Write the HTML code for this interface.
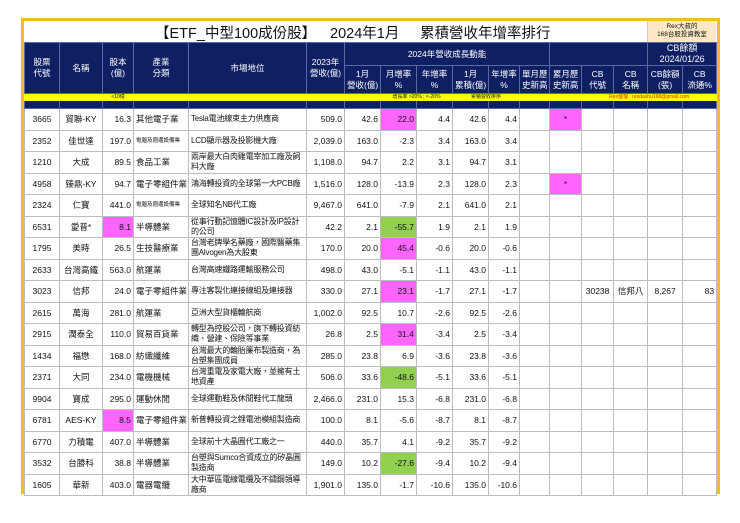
<!DOCTYPE html>
<html><head><meta charset="utf-8"><style>
*{margin:0;padding:0;box-sizing:border-box}
body{width:740px;height:523px;background:#fff;position:relative;overflow:hidden;font-family:"Liberation Sans","Noto Sans CJK TC",sans-serif;color:#111}
#frame{position:absolute;left:21px;top:18px;width:699px;height:476px;border:3px solid #f2bd1d;border-bottom:none}
#title{position:absolute;left:24px;top:21px;width:692px;height:21px;font-size:14.5px;white-space:nowrap}
#title span{position:absolute;top:1px}
#rex{position:absolute;left:647px;top:21px;width:69px;height:21px;background:#fce8c4;font-size:6.5px;text-align:center;line-height:8px;padding-top:2px;border-left:1px solid #ccc}
table{position:absolute;left:24px;top:42px;border-collapse:collapse;table-layout:fixed;width:692px}
td{border:1px solid #bdbdbd;font-size:8.5px;overflow:hidden;white-space:nowrap;padding:0 2px}
tr.h td{background:#0e1f63;color:#fff;text-align:center;border-color:#5a6aa0;line-height:11px;font-size:8.5px}
tr.y td{background:#ffff00;height:6px;font-size:5px;line-height:6px;border-color:#ffff00;padding:0}
tr.d td{background:#0e1f63;height:8px;border-color:#5a6aa0}
tr.r td{height:21.5px;line-height:10px}
tr.r td:nth-child(5){font-size:8px;letter-spacing:-0.2px}
.c{text-align:center}.rt{text-align:right}.l{text-align:left}
.w{white-space:normal}
.p{background:#ff66ff}.g{background:#92d050}
.s{font-size:5.5px}
</style></head><body>
<div id="frame"></div>
<div id="title"><span style="left:131px">【ETF_中型100成份股】</span><span style="left:306px">2024年1月</span><span style="left:396px">累積營收年增率排行</span></div>
<div id="rex">Rex大叔的<br>168台股投資教室</div>
<table>
<colgroup><col style="width:35px"><col style="width:43px"><col style="width:31px"><col style="width:55px"><col style="width:118px"><col style="width:38px"><col style="width:36px"><col style="width:36px"><col style="width:36px"><col style="width:36px"><col style="width:31px"><col style="width:30px"><col style="width:32px"><col style="width:32px"><col style="width:34px"><col style="width:35px"><col style="width:34px"></colgroup>
<tr class="h" style="height:20px"><td rowspan="2">股票<br>代號</td><td rowspan="2">名稱</td><td rowspan="2">股本<br>(億)</td><td rowspan="2">產業<br>分類</td><td rowspan="2">市場地位</td><td rowspan="2">2023年<br>營收(億)</td><td colspan="6">2024年營收成長動能</td><td colspan="3"></td><td colspan="2" style="font-size:9px">CB餘額<br>2024/01/26</td></tr>
<tr class="h" style="height:28px"><td>1月<br>營收(億)</td><td>月增率<br>%</td><td>年增率<br>%</td><td>1月<br>累積(億)</td><td>年增率<br>%</td><td>單月歷<br>史新高</td><td>累月歷<br>史新高</td><td>CB<br>代號</td><td>CB<br>名稱</td><td>CB餘額<br>(張)</td><td>CB<br>流通%</td></tr>
<tr class="y"><td></td><td></td><td class="c">&lt;10億</td><td></td><td></td><td></td><td></td><td colspan="2" class="c">增長率 &gt;20% ; &lt;-20%</td><td colspan="2" class="c">累積營收排序</td><td></td><td></td><td colspan="4" class="c" style="color:#e02020">Rex整理 : rexdashu168@gmail.com</td></tr>
<tr class="d"><td></td><td></td><td></td><td></td><td></td><td></td><td></td><td></td><td></td><td></td><td></td><td></td><td></td><td></td><td></td><td></td><td></td></tr>
<tr class="r"><td class="c">3665</td><td class="c">貿聯-KY</td><td class="rt">16.3</td><td>其他電子業</td><td>Tesla電池線束主力供應商</td><td class="rt">509.0</td><td class="rt">42.6</td><td class="rt p">22.0</td><td class="rt">4.4</td><td class="rt">42.6</td><td class="rt">4.4</td><td></td><td class="c p">*</td><td></td><td></td><td></td><td></td></tr>
<tr class="r"><td class="c">2352</td><td class="c">佳世達</td><td class="rt">197.0</td><td class="s">電腦及週邊設備業</td><td>LCD顯示器及投影機大廠</td><td class="rt">2,039.0</td><td class="rt">163.0</td><td class="rt">-2.3</td><td class="rt">3.4</td><td class="rt">163.0</td><td class="rt">3.4</td><td></td><td></td><td></td><td></td><td></td><td></td></tr>
<tr class="r"><td class="c">1210</td><td class="c">大成</td><td class="rt">89.5</td><td>食品工業</td><td class="w">兩岸最大白肉雞電宰加工廠及飼料大廠</td><td class="rt">1,108.0</td><td class="rt">94.7</td><td class="rt">2.2</td><td class="rt">3.1</td><td class="rt">94.7</td><td class="rt">3.1</td><td></td><td></td><td></td><td></td><td></td><td></td></tr>
<tr class="r"><td class="c">4958</td><td class="c">臻鼎-KY</td><td class="rt">94.7</td><td>電子零組件業</td><td>鴻海轉投資的全球第一大PCB廠</td><td class="rt">1,516.0</td><td class="rt">128.0</td><td class="rt">-13.9</td><td class="rt">2.3</td><td class="rt">128.0</td><td class="rt">2.3</td><td></td><td class="c p">*</td><td></td><td></td><td></td><td></td></tr>
<tr class="r"><td class="c">2324</td><td class="c">仁寶</td><td class="rt">441.0</td><td class="s">電腦及週邊設備業</td><td>全球知名NB代工廠</td><td class="rt">9,467.0</td><td class="rt">641.0</td><td class="rt">-7.9</td><td class="rt">2.1</td><td class="rt">641.0</td><td class="rt">2.1</td><td></td><td></td><td></td><td></td><td></td><td></td></tr>
<tr class="r"><td class="c">6531</td><td class="c">愛普*</td><td class="rt p">8.1</td><td>半導體業</td><td class="w">從事行動記憶體IC設計及IP設計的公司</td><td class="rt">42.2</td><td class="rt">2.1</td><td class="rt g">-55.7</td><td class="rt">1.9</td><td class="rt">2.1</td><td class="rt">1.9</td><td></td><td></td><td></td><td></td><td></td><td></td></tr>
<tr class="r"><td class="c">1795</td><td class="c">美時</td><td class="rt">26.5</td><td>生技醫療業</td><td class="w">台灣老牌學名藥廠，國際醫藥集團Alvogen為大股東</td><td class="rt">170.0</td><td class="rt">20.0</td><td class="rt p">45.4</td><td class="rt">-0.6</td><td class="rt">20.0</td><td class="rt">-0.6</td><td></td><td></td><td></td><td></td><td></td><td></td></tr>
<tr class="r"><td class="c">2633</td><td class="c">台灣高鐵</td><td class="rt">563.0</td><td>航運業</td><td>台灣高速鐵路運輸服務公司</td><td class="rt">498.0</td><td class="rt">43.0</td><td class="rt">-5.1</td><td class="rt">-1.1</td><td class="rt">43.0</td><td class="rt">-1.1</td><td></td><td></td><td></td><td></td><td></td><td></td></tr>
<tr class="r"><td class="c">3023</td><td class="c">信邦</td><td class="rt">24.0</td><td>電子零組件業</td><td>專注客製化連接線組及連接器</td><td class="rt">330.0</td><td class="rt">27.1</td><td class="rt p">23.1</td><td class="rt">-1.7</td><td class="rt">27.1</td><td class="rt">-1.7</td><td></td><td></td><td class="c">30238</td><td class="c">信邦八</td><td class="c">8,267</td><td class="rt">83</td></tr>
<tr class="r"><td class="c">2615</td><td class="c">萬海</td><td class="rt">281.0</td><td>航運業</td><td>亞洲大型貨櫃輪航商</td><td class="rt">1,002.0</td><td class="rt">92.5</td><td class="rt">10.7</td><td class="rt">-2.6</td><td class="rt">92.5</td><td class="rt">-2.6</td><td></td><td></td><td></td><td></td><td></td><td></td></tr>
<tr class="r"><td class="c">2915</td><td class="c">潤泰全</td><td class="rt">110.0</td><td>貿易百貨業</td><td class="w">轉型為控股公司，旗下轉投資紡織、營建、保險等事業</td><td class="rt">26.8</td><td class="rt">2.5</td><td class="rt p">31.4</td><td class="rt">-3.4</td><td class="rt">2.5</td><td class="rt">-3.4</td><td></td><td></td><td></td><td></td><td></td><td></td></tr>
<tr class="r"><td class="c">1434</td><td class="c">福懋</td><td class="rt">168.0</td><td>紡織纖維</td><td class="w">台灣最大的輪胎簾布製造商，為台塑集團成員</td><td class="rt">285.0</td><td class="rt">23.8</td><td class="rt">6.9</td><td class="rt">-3.6</td><td class="rt">23.8</td><td class="rt">-3.6</td><td></td><td></td><td></td><td></td><td></td><td></td></tr>
<tr class="r"><td class="c">2371</td><td class="c">大同</td><td class="rt">234.0</td><td>電機機械</td><td class="w">台灣重電及家電大廠，並擁有土地資產</td><td class="rt">506.0</td><td class="rt">33.6</td><td class="rt g">-48.6</td><td class="rt">-5.1</td><td class="rt">33.6</td><td class="rt">-5.1</td><td></td><td></td><td></td><td></td><td></td><td></td></tr>
<tr class="r"><td class="c">9904</td><td class="c">寶成</td><td class="rt">295.0</td><td>運動休閒</td><td>全球運動鞋及休閒鞋代工龍頭</td><td class="rt">2,466.0</td><td class="rt">231.0</td><td class="rt">15.3</td><td class="rt">-6.8</td><td class="rt">231.0</td><td class="rt">-6.8</td><td></td><td></td><td></td><td></td><td></td><td></td></tr>
<tr class="r"><td class="c">6781</td><td class="c">AES-KY</td><td class="rt p">8.5</td><td>電子零組件業</td><td>新普轉投資之鋰電池模組製造商</td><td class="rt">100.0</td><td class="rt">8.1</td><td class="rt">-5.6</td><td class="rt">-8.7</td><td class="rt">8.1</td><td class="rt">-8.7</td><td></td><td></td><td></td><td></td><td></td><td></td></tr>
<tr class="r"><td class="c">6770</td><td class="c">力積電</td><td class="rt">407.0</td><td>半導體業</td><td>全球前十大晶圓代工廠之一</td><td class="rt">440.0</td><td class="rt">35.7</td><td class="rt">4.1</td><td class="rt">-9.2</td><td class="rt">35.7</td><td class="rt">-9.2</td><td></td><td></td><td></td><td></td><td></td><td></td></tr>
<tr class="r"><td class="c">3532</td><td class="c">台勝科</td><td class="rt">38.8</td><td>半導體業</td><td class="w">台塑與Sumco合資成立的矽晶圓製造商</td><td class="rt">149.0</td><td class="rt">10.2</td><td class="rt g">-27.6</td><td class="rt">-9.4</td><td class="rt">10.2</td><td class="rt">-9.4</td><td></td><td></td><td></td><td></td><td></td><td></td></tr>
<tr class="r"><td class="c">1605</td><td class="c">華新</td><td class="rt">403.0</td><td>電器電纜</td><td class="w">大中華區電線電纜及不鏽鋼領導廠商</td><td class="rt">1,901.0</td><td class="rt">135.0</td><td class="rt">-1.7</td><td class="rt">-10.6</td><td class="rt">135.0</td><td class="rt">-10.6</td><td></td><td></td><td></td><td></td><td></td><td></td></tr>
</table>
</body></html>
